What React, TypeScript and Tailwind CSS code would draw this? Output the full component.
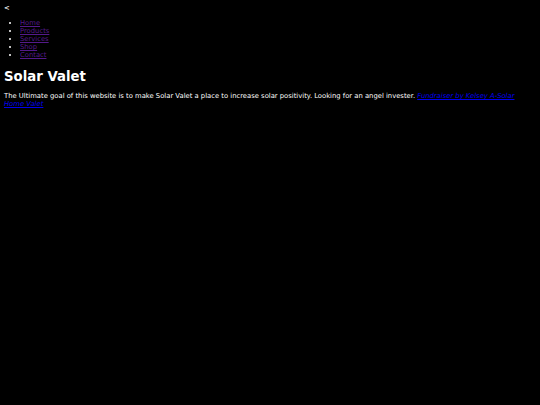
export default function App() {
  return (
    <div
      className="min-h-[405px] w-[540px] bg-black p-[4px] text-[6.8px] leading-[8px] text-white"
      style={{ fontFamily: '"DejaVu Sans", sans-serif' }}
    >
      <div>&lt;</div>
      <ul className="mt-[7px] list-disc pl-[16px]">
        <li><a href="#" className="text-[#551a8b] underline">Home</a></li>
        <li><a href="#" className="text-[#551a8b] underline">Products</a></li>
        <li><a href="#" className="text-[#551a8b] underline">Services</a></li>
        <li><a href="#" className="text-[#551a8b] underline">Shop</a></li>
        <li><a href="#" className="text-[#551a8b] underline">Contact</a></li>
      </ul>
      <h1 className="mt-[9px] text-[13.3px] font-bold leading-[17px]">Solar Valet</h1>
      <p className="mt-[7px]">
        The Ultimate goal of this website is to make Solar Valet a place to increase solar positivity. Looking for an angel invester.{' '}
        <a href="#" className="italic text-[#0000ee] underline">Fundraiser by Kelsey A-Solar Home Valet</a>
      </p>
    </div>
  );
}
